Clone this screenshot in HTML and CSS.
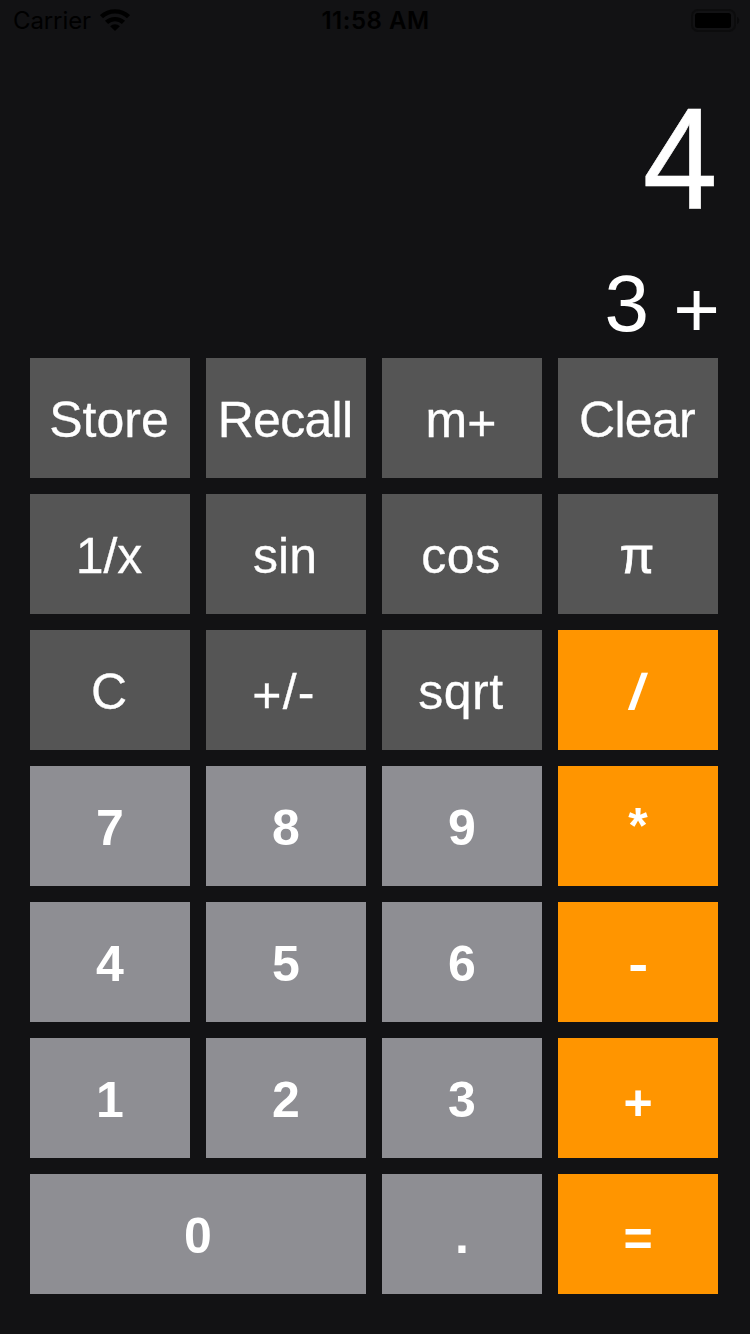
FILE: index.html
```html
<!DOCTYPE html>
<html lang="en">
<head>
<meta charset="utf-8">
<title>Calculator</title>
<link rel="stylesheet" href="styles.css">
</head>
<body>
<header class="status">
  <div class="status-left"><span class="carrier">Carrier</span>
    <svg class="wifi" width="30" height="22" viewBox="0 0 29 22" preserveAspectRatio="none"><path d="M14.5 22l4.7-4.8a6.7 6.7 0 0 0-9.4 0z"/><path d="M6.3 13.4a11.8 11.8 0 0 1 16.4 0M1.4 7.7a18.8 18.8 0 0 1 26.2 0" fill="none" stroke="#000" stroke-width="4.4"/></svg>
  </div>
  <div class="time">11:58 AM</div>
  <svg class="battery" width="49" height="23" viewBox="0 0 49 23"><rect x="1" y="1" width="43" height="21" rx="6" fill="none" stroke="#0c0c0d" stroke-width="2"/><rect x="4" y="4" width="36" height="15" rx="2.5"/><path d="M46 8c3 1 3 6 0 7z" fill="#0a0a0b"/></svg>
</header>
<section class="display">
  <div class="result">4</div>
  <div class="history">3 <span class="low-lg">+</span></div>
</section>
<main class="keys">
  <button class="key fn">Store</button><button class="key fn tight">Recall</button><button class="key fn">m<span class="low">+</span></button><button class="key fn tight">Clear</button>
  <button class="key fn">1/x</button><button class="key fn">sin</button><button class="key fn loose">cos</button><button class="key fn pi">π</button>
  <button class="key fn">C</button><button class="key fn signs"><span class="low">+</span>/-</button><button class="key fn loose">sqrt</button><button class="key op"><span class="slash">/</span></button>
  <button class="key">7</button><button class="key">8</button><button class="key">9</button><button class="key op"><span class="star">*</span></button>
  <button class="key">4</button><button class="key">5</button><button class="key">6</button><button class="key op"><span class="minus">-</span></button>
  <button class="key">1</button><button class="key">2</button><button class="key">3</button><button class="key op"><span class="low">+</span></button>
  <button class="key wide">0</button><button class="key">.</button><button class="key op"><span class="low">=</span></button>
</main>
</body>
</html>
```
FILE: styles.css
```css
* { box-sizing: border-box; }
body {
  margin: 0;
  width: 750px;
  height: 1334px;
  overflow: hidden;
  background: #121214;
  color: #fff;
  font-family: "Liberation Sans", Arial, sans-serif;
}
.status {
  display: grid;
  grid-template-columns: 1fr auto 1fr;
  align-items: center;
  height: 40px;
  padding: 0 10px 0 13px;
  color: #000;
  font-family: Inter, sans-serif;
  font-size: 24px;
}
.status-left { display: flex; align-items: center; gap: 9px; }
.carrier { letter-spacing: -0.1px; }
.time { font-weight: 600; letter-spacing: 0.5px; margin-right: 2px; }
.battery { justify-self: end; }
.display {
  height: 318px;
  padding: 40px 32px 0 0;
  text-align: right;
}
.result {
  height: 160px;
  font-size: 144px;
  line-height: 160px;
  transform: scaleX(0.935);
  transform-origin: 714px 50%;
  -webkit-text-stroke: 0.6px #fff;
}
.history {
  height: 92px;
  margin: 18px -2px 0 0;
  font-size: 80px;
  line-height: 92px;
  word-spacing: 2px;
}
.keys {
  display: grid;
  grid-template-columns: repeat(4, 160px);
  grid-auto-rows: 120px;
  gap: 16px;
  padding-left: 30px;
}
.key {
  border: 0;
  padding: 4px 0 0;
  background: #8e8e93;
  color: #fff;
  font: bold 50px "Liberation Sans", Arial, sans-serif;
}
.fn { padding-right: 2px; background: #555; font-weight: normal; -webkit-text-stroke: 0.3px #fff; }
.op { background: #ff9500; }
.wide { grid-column: span 2; }
.tight { letter-spacing: -0.7px; }
.loose { letter-spacing: 0.5px; }
.signs { padding-right: 4px; letter-spacing: 1.2px; }
.pi { -webkit-text-stroke: 0.8px #fff; }

/* Operators sit at their own heights beside the digits */
.low { line-height: 0; vertical-align: -3px; }
.low-lg { line-height: 0; vertical-align: -6px; }
.star { line-height: 0; vertical-align: 2px; }
.slash, .minus { display: inline-block; transform: scaleX(1.2); }
.slash { transform: skewX(-9deg) scaleX(1.1); }
```
